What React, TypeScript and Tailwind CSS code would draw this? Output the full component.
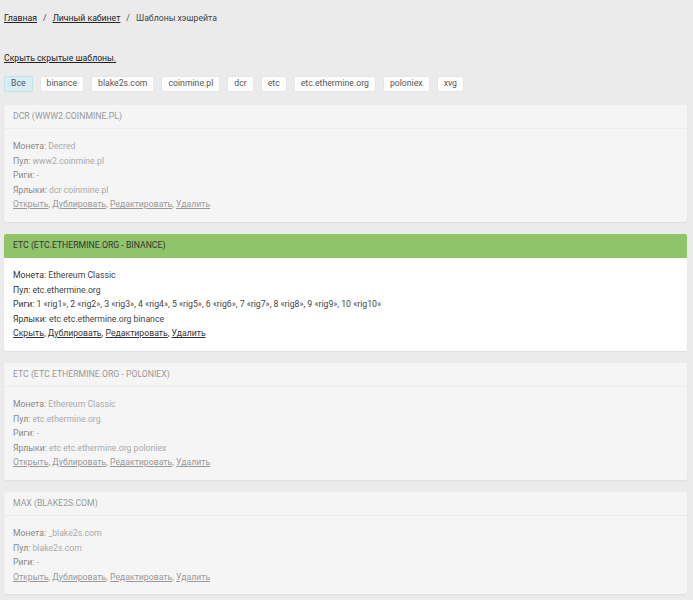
import * as React from "react";

type Template = {
  title: string;
  coin: string;
  pool: string;
  rigs: string;
  tags?: string;
  active?: boolean;
};

const templates: Template[] = [
  { title: "DCR (www2.coinmine.pl)", coin: "Decred", pool: "www2.coinmine.pl", rigs: "-", tags: "dcr coinmine.pl" },
  {
    title: "ETC (etc.ethermine.org - binance)",
    coin: "Ethereum Classic",
    pool: "etc.ethermine.org",
    rigs: "1 «rig1», 2 «rig2», 3 «rig3», 4 «rig4», 5 «rig5», 6 «rig6», 7 «rig7», 8 «rig8», 9 «rig9», 10 «rig10»",
    tags: "etc etc.ethermine.org binance",
    active: true,
  },
  { title: "ETC (etc.ethermine.org - poloniex)", coin: "Ethereum Classic", pool: "etc.ethermine.org", rigs: "-", tags: "etc etc.ethermine.org poloniex" },
  { title: "MAX (blake2s.com)", coin: "_blake2s.com", pool: "blake2s.com", rigs: "-" },
];

const filters = ["binance", "blake2s.com", "coinmine.pl", "dcr", "etc", "etc.ethermine.org", "poloniex", "xvg"];

function TemplateCard({ t }: { t: Template }) {
  const label = t.active ? "text-[#333]" : "text-[#888]";
  const value = t.active ? "text-[#444]" : "text-[#aaa]";
  const link = t.active ? "text-[#333]" : "text-[#999]";
  return (
    <div className={`rounded-[2px] shadow-[0_1px_2px_rgba(0,0,0,0.06)] ${t.active ? "bg-white" : "bg-[#f5f5f5]"}`}>
      <div
        className={`h-[24px] pl-[9px] pr-[10px] flex items-center uppercase ${
          t.active ? "bg-[#8fc46a] text-[#333] rounded-t-[2px]" : "text-[#999] border-b border-[#ececec]"
        }`}
      >
        {t.title}
      </div>
      <div className="pl-[9px] pr-[10px] pt-[10px] pb-[10px] leading-[14.5px]">
        <div>
          <span className={label}>Монета:</span> <span className={value}>{t.coin}</span>
        </div>
        <div>
          <span className={label}>Пул:</span> <span className={value}>{t.pool}</span>
        </div>
        <div>
          <span className={label}>Риги:</span> <span className={value}>{t.rigs}</span>
        </div>
        {t.tags && (
          <div>
            <span className={label}>Ярлыки:</span> <span className={value}>{t.tags}</span>
          </div>
        )}
        <div className={link}>
          <a className="underline">{t.active ? "Скрыть" : "Открыть"}</a>, <a className="underline">Дублировать</a>,{" "}
          <a className="underline">Редактировать</a>, <a className="underline">Удалить</a>
        </div>
      </div>
    </div>
  );
}

export default function App() {
  return (
    <div
      className="min-h-screen bg-[#ebebeb] pl-[4px] pr-[6px] text-[8.7px] text-[#333]"
      style={{ fontFamily: "Roboto, 'Liberation Sans', sans-serif" }}
    >
      <div className="pt-[12px] h-[24px] leading-[12px] text-[#444] box-content">
        <a className="underline text-[#222]">Главная</a>
        <span className="mx-[6px]">/</span>
        <a className="underline text-[#222]">Личный кабинет</a>
        <span className="mx-[6px]">/</span>
        <span>Шаблоны хэшрейта</span>
      </div>
      <div className="mt-[16px] leading-[12px]">
        <a className="underline text-[#222]">Скрыть скрытые шаблоны.</a>
      </div>
      <div className="mt-[12px] flex gap-[7px]">
        <span className="h-[16px] px-[6px] flex items-center bg-[#d7eef4] border border-[#c5e3eb] rounded-[2px] text-[#555]">
          Все
        </span>
        {filters.map((f) => (
          <span key={f} className="h-[16px] px-[6px] flex items-center bg-white border border-[#e6e6e6] rounded-[2px] text-[#555]">
            {f}
          </span>
        ))}
      </div>
      <div className="mt-[13px] flex flex-col gap-[12.5px] pb-4">
        {templates.map((t) => (
          <TemplateCard key={t.title} t={t} />
        ))}
      </div>
    </div>
  );
}
